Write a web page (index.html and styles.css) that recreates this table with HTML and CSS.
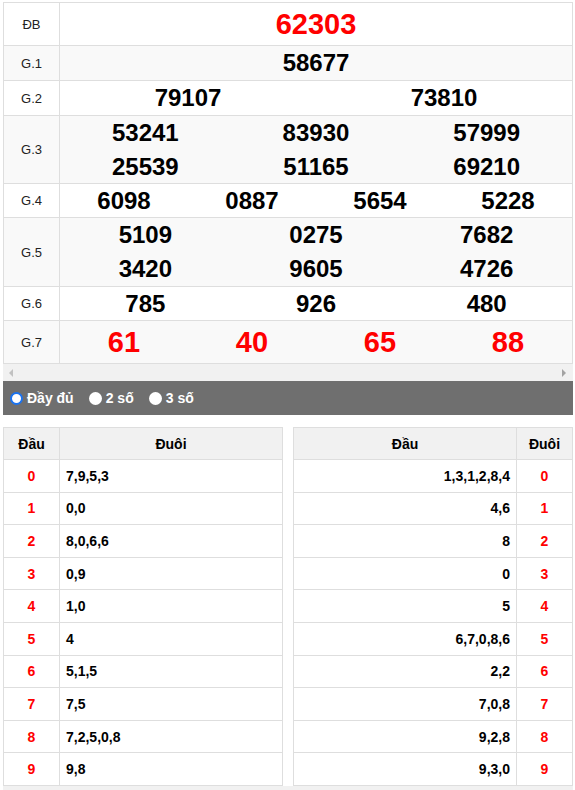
FILE: index.html
```html
<!DOCTYPE html>
<html lang="vi">
<head>
<meta charset="utf-8">
<title>Kết quả xổ số</title>
<link rel="stylesheet" href="styles.css">
</head>
<body>
<div class="wrap">
  <div class="results">
    <div class="row">
      <div class="lbl">ĐB</div>
      <div class="vals c1"><div class="num red big h42">62303</div></div>
    </div>
    <div class="row alt">
      <div class="lbl">G.1</div>
      <div class="vals c1"><div class="num h34">58677</div></div>
    </div>
    <div class="row">
      <div class="lbl">G.2</div>
      <div class="vals c2"><div class="num h34">79107</div><div class="num h34">73810</div></div>
    </div>
    <div class="row alt">
      <div class="lbl">G.3</div>
      <div class="vals c3">
        <div class="num h335">53241</div><div class="num h335">83930</div><div class="num h335">57999</div>
        <div class="num h335">25539</div><div class="num h335">51165</div><div class="num h335">69210</div>
      </div>
    </div>
    <div class="row">
      <div class="lbl">G.4</div>
      <div class="vals c4"><div class="num h33">6098</div><div class="num h33">0887</div><div class="num h33">5654</div><div class="num h33">5228</div></div>
    </div>
    <div class="row alt">
      <div class="lbl">G.5</div>
      <div class="vals c3">
        <div class="num h34">5109</div><div class="num h34">0275</div><div class="num h34">7682</div>
        <div class="num h34">3420</div><div class="num h34">9605</div><div class="num h34">4726</div>
      </div>
    </div>
    <div class="row">
      <div class="lbl">G.6</div>
      <div class="vals c3"><div class="num h33">785</div><div class="num h33">926</div><div class="num h33">480</div></div>
    </div>
    <div class="row alt">
      <div class="lbl">G.7</div>
      <div class="vals c4"><div class="num red big h42">61</div><div class="num red big h42">40</div><div class="num red big h42">65</div><div class="num red big h42">88</div></div>
    </div>
  </div>
  <div class="hscroll"><span class="arr arr-left"></span><span class="arr arr-right"></span></div>

  <div class="bar">
    <label class="opt"><input type="radio" name="mode" checked><span>Đầy đủ</span></label>
    <label class="opt"><input type="radio" name="mode"><span>2 số</span></label>
    <label class="opt"><input type="radio" name="mode"><span>3 số</span></label>
  </div>

  <div class="loto">
    <div class="lt lt-left">
      <div class="lrow head"><div class="c-a">Đầu</div><div class="c-b">Đuôi</div></div>
      <div class="lrow"><div class="c-a red">0</div><div class="c-b">7,9,5,3</div></div>
      <div class="lrow"><div class="c-a red">1</div><div class="c-b">0,0</div></div>
      <div class="lrow"><div class="c-a red">2</div><div class="c-b">8,0,6,6</div></div>
      <div class="lrow"><div class="c-a red">3</div><div class="c-b">0,9</div></div>
      <div class="lrow"><div class="c-a red">4</div><div class="c-b">1,0</div></div>
      <div class="lrow"><div class="c-a red">5</div><div class="c-b">4</div></div>
      <div class="lrow"><div class="c-a red">6</div><div class="c-b">5,1,5</div></div>
      <div class="lrow"><div class="c-a red">7</div><div class="c-b">7,5</div></div>
      <div class="lrow"><div class="c-a red">8</div><div class="c-b">7,2,5,0,8</div></div>
      <div class="lrow"><div class="c-a red">9</div><div class="c-b">9,8</div></div>
    </div>
    <div class="lt lt-right">
      <div class="lrow head"><div class="c-a">Đầu</div><div class="c-b">Đuôi</div></div>
      <div class="lrow"><div class="c-a">1,3,1,2,8,4</div><div class="c-b red">0</div></div>
      <div class="lrow"><div class="c-a">4,6</div><div class="c-b red">1</div></div>
      <div class="lrow"><div class="c-a">8</div><div class="c-b red">2</div></div>
      <div class="lrow"><div class="c-a">0</div><div class="c-b red">3</div></div>
      <div class="lrow"><div class="c-a">5</div><div class="c-b red">4</div></div>
      <div class="lrow"><div class="c-a">6,7,0,8,6</div><div class="c-b red">5</div></div>
      <div class="lrow"><div class="c-a">2,2</div><div class="c-b red">6</div></div>
      <div class="lrow"><div class="c-a">7,0,8</div><div class="c-b red">7</div></div>
      <div class="lrow"><div class="c-a">9,2,8</div><div class="c-b red">8</div></div>
      <div class="lrow"><div class="c-a">9,3,0</div><div class="c-b red">9</div></div>
    </div>
  </div>
  <div class="bottom-track"></div>
</div>
</body>
</html>
```

FILE: styles.css
```css
* { box-sizing: border-box; }
html, body { margin: 0; padding: 0; background: #fff; }
body { font-family: "Liberation Sans", Arial, sans-serif; color: #000; }
.wrap { padding: 2px 2px 0 3px; width: 575px; }

.results { border: 1px solid #dedede; border-bottom: 0; }
.row { display: grid; grid-template-columns: 56px 1fr; border-bottom: 1px solid #dedede; background: #fff; }
.row.alt { background: #f9f9f9; }
.lbl { border-right: 1px solid #dedede; display: flex; align-items: center; justify-content: center; font-size: 13px; color: #222; }
.vals { display: grid; }
.c1 { grid-template-columns: 1fr; }
.c2 { grid-template-columns: repeat(2, 1fr); }
.c3 { grid-template-columns: repeat(3, 1fr); }
.c4 { grid-template-columns: repeat(4, 1fr); }
.num { text-align: center; font-weight: bold; font-size: 24px; }
.num.big { font-size: 29px; }
.red { color: #f00; }
.h42 { line-height: 42px; }
.h34 { line-height: 34px; }
.h33 { line-height: 33px; }
.h335 { line-height: 33.5px; }

.hscroll { height: 17px; background: #f1f1f1; display: flex; align-items: center; justify-content: space-between; padding: 0 7px 0 6px; }
.arr { width: 0; height: 0; border-top: 4px solid transparent; border-bottom: 4px solid transparent; }
.arr-left { border-right: 4px solid #c1c1c1; }
.arr-right { border-left: 4px solid #a3a3a3; }

.bar { height: 34px; background: #6f6f6f; display: flex; align-items: center; padding-left: 7px; }
.opt { display: flex; align-items: center; color: #fff; font-weight: bold; font-size: 14px; margin-right: 15px; }
.opt input { appearance: none; -webkit-appearance: none; width: 13px; height: 13px; margin: 0 4px 0 0; border-radius: 50%; background: #fff; border: 0; }
.opt input:checked { border: 2px solid #1a73f0; }

.loto { display: flex; justify-content: space-between; margin-top: 12px; }
.lt { width: 280px; border: 1px solid #dedede; border-bottom: 0; }
.lrow { display: grid; height: 32.6px; border-bottom: 1px solid #dedede; font-size: 14px; font-weight: bold; }
.lt-left .lrow { grid-template-columns: 56px 1fr; }
.lt-right .lrow { grid-template-columns: 1fr 56px; }
.lrow.head { height: 32px; background: #f1f1f1; }
.lrow > div { display: flex; align-items: center; }
.lt-left .c-a { border-right: 1px solid #dedede; justify-content: center; }
.lt-left .c-b { padding-left: 6px; }
.lt-right .c-a { justify-content: flex-end; padding-right: 6px; }
.lt-right .c-b { border-left: 1px solid #dedede; justify-content: center; }
.lrow.head > div { justify-content: center; padding: 0; }

.bottom-track { height: 10px; background: #f1f1f1; }
```
